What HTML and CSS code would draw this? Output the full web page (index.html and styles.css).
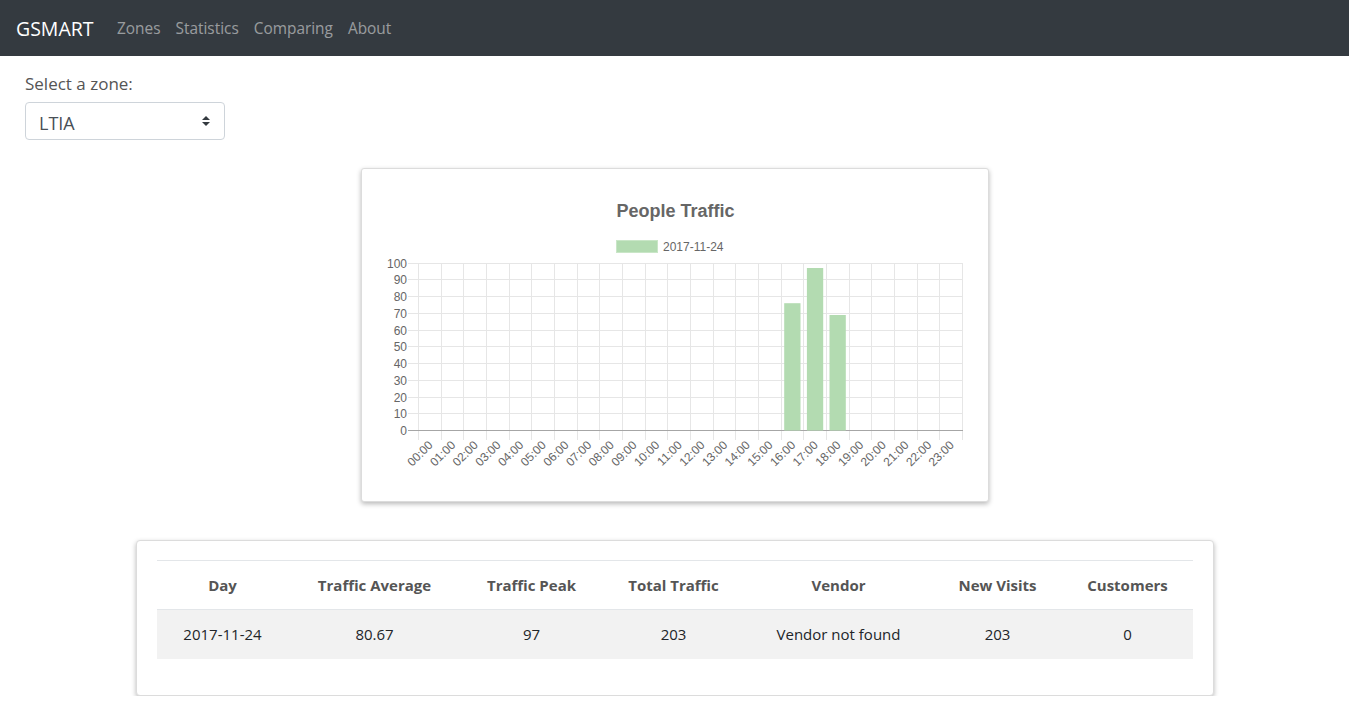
FILE: index.html
```html
<!DOCTYPE html>
<html lang="en">
<head>
<meta charset="utf-8">
<title>GSMART</title>
<link rel="stylesheet" href="styles.css">
</head>
<body>
<nav class="navbar">
  <a class="brand" href="#">GSMART</a>
  <a class="nav-link" href="#">Zones</a>
  <a class="nav-link" href="#">Statistics</a>
  <a class="nav-link" href="#">Comparing</a>
  <a class="nav-link" href="#">About</a>
</nav>
<main class="main">
  <label class="zone-label">Select a zone:</label>
  <div class="zone-select">
    <span class="zone-value">LTIA</span>
    <svg class="select-arrows" width="8" height="10" viewBox="0 0 8 10"><path d="M0 4 L4 0 L8 4 Z M0 6 L4 10 L8 6 Z" fill="#343a40"/></svg>
  </div>

  <section class="chart-card">
    <svg class="chart" width="626" height="332" viewBox="361 169 626 332" font-family="'Liberation Sans', Arial, sans-serif">
      <text x="674.5" y="216.5" text-anchor="middle" font-size="18" font-weight="bold" fill="#666">People Traffic</text>
      <rect x="615.5" y="240.5" width="41" height="12" fill="#b3dbb1" stroke="#c9e6c7" stroke-width="1"/>
      <text x="662" y="250.5" font-size="12" fill="#666">2017-11-24</text>

      <g stroke="#e6e6e6" stroke-width="1">
        <line x1="407" y1="263.5" x2="962" y2="263.5"/>
        <line x1="407" y1="279.5" x2="962" y2="279.5"/>
        <line x1="407" y1="296.5" x2="962" y2="296.5"/>
        <line x1="407" y1="313.5" x2="962" y2="313.5"/>
        <line x1="407" y1="330.5" x2="962" y2="330.5"/>
        <line x1="407" y1="346.5" x2="962" y2="346.5"/>
        <line x1="407" y1="363.5" x2="962" y2="363.5"/>
        <line x1="407" y1="380.5" x2="962" y2="380.5"/>
        <line x1="407" y1="397.5" x2="962" y2="397.5"/>
        <line x1="407" y1="413.5" x2="962" y2="413.5"/>
      </g>
      <g stroke="#e6e6e6" stroke-width="1">
        <line x1="417.5" y1="263" x2="417.5" y2="440"/>
        <line x1="440.5" y1="263" x2="440.5" y2="440"/>
        <line x1="462.5" y1="263" x2="462.5" y2="440"/>
        <line x1="485.5" y1="263" x2="485.5" y2="440"/>
        <line x1="508.5" y1="263" x2="508.5" y2="440"/>
        <line x1="530.5" y1="263" x2="530.5" y2="440"/>
        <line x1="553.5" y1="263" x2="553.5" y2="440"/>
        <line x1="576.5" y1="263" x2="576.5" y2="440"/>
        <line x1="598.5" y1="263" x2="598.5" y2="440"/>
        <line x1="621.5" y1="263" x2="621.5" y2="440"/>
        <line x1="644.5" y1="263" x2="644.5" y2="440"/>
        <line x1="666.5" y1="263" x2="666.5" y2="440"/>
        <line x1="689.5" y1="263" x2="689.5" y2="440"/>
        <line x1="712.5" y1="263" x2="712.5" y2="440"/>
        <line x1="734.5" y1="263" x2="734.5" y2="440"/>
        <line x1="757.5" y1="263" x2="757.5" y2="440"/>
        <line x1="780.5" y1="263" x2="780.5" y2="440"/>
        <line x1="802.5" y1="263" x2="802.5" y2="440"/>
        <line x1="825.5" y1="263" x2="825.5" y2="440"/>
        <line x1="848.5" y1="263" x2="848.5" y2="440"/>
        <line x1="870.5" y1="263" x2="870.5" y2="440"/>
        <line x1="893.5" y1="263" x2="893.5" y2="440"/>
        <line x1="916.5" y1="263" x2="916.5" y2="440"/>
        <line x1="938.5" y1="263" x2="938.5" y2="440"/>
        <line x1="961.5" y1="263" x2="961.5" y2="440"/>
      </g>
      <line x1="407" y1="430.5" x2="962" y2="430.5" stroke="#a6a6a6" stroke-width="1"/>

      <g font-size="12" fill="#666" text-anchor="end">
        <text x="406" y="267.5">100</text>
        <text x="406" y="284">90</text>
        <text x="406" y="301">80</text>
        <text x="406" y="318">70</text>
        <text x="406" y="334.5">60</text>
        <text x="406" y="351">50</text>
        <text x="406" y="368">40</text>
        <text x="406" y="385">30</text>
        <text x="406" y="401.5">20</text>
        <text x="406" y="418">10</text>
        <text x="406" y="435">0</text>
      </g>

      <g fill="#b3dbb1">
        <rect x="783.2" y="303.2" width="16.3" height="127.3"/>
        <rect x="805.9" y="268" width="16.3" height="162.5"/>
        <rect x="828.5" y="315" width="16.3" height="115.5"/>
      </g>

      <g font-size="12" fill="#666" text-anchor="end" dominant-baseline="central">
        <text transform="translate(429.6 443) rotate(-45)">00:00</text>
        <text transform="translate(452.3 443) rotate(-45)">01:00</text>
        <text transform="translate(474.9 443) rotate(-45)">02:00</text>
        <text transform="translate(497.6 443) rotate(-45)">03:00</text>
        <text transform="translate(520.3 443) rotate(-45)">04:00</text>
        <text transform="translate(542.9 443) rotate(-45)">05:00</text>
        <text transform="translate(565.6 443) rotate(-45)">06:00</text>
        <text transform="translate(588.3 443) rotate(-45)">07:00</text>
        <text transform="translate(610.9 443) rotate(-45)">08:00</text>
        <text transform="translate(633.6 443) rotate(-45)">09:00</text>
        <text transform="translate(656.3 443) rotate(-45)">10:00</text>
        <text transform="translate(678.9 443) rotate(-45)">11:00</text>
        <text transform="translate(701.6 443) rotate(-45)">12:00</text>
        <text transform="translate(724.3 443) rotate(-45)">13:00</text>
        <text transform="translate(746.9 443) rotate(-45)">14:00</text>
        <text transform="translate(769.6 443) rotate(-45)">15:00</text>
        <text transform="translate(792.3 443) rotate(-45)">16:00</text>
        <text transform="translate(814.9 443) rotate(-45)">17:00</text>
        <text transform="translate(837.6 443) rotate(-45)">18:00</text>
        <text transform="translate(860.3 443) rotate(-45)">19:00</text>
        <text transform="translate(882.9 443) rotate(-45)">20:00</text>
        <text transform="translate(905.6 443) rotate(-45)">21:00</text>
        <text transform="translate(928.3 443) rotate(-45)">22:00</text>
        <text transform="translate(950.9 443) rotate(-45)">23:00</text>
      </g>
    </svg>
  </section>

  <section class="table-card">
    <table class="stats-table">
      <colgroup>
        <col class="c-day"><col class="c-avg"><col class="c-peak"><col class="c-total"><col class="c-vendor"><col class="c-new"><col class="c-cust">
      </colgroup>
      <thead>
        <tr>
          <th>Day</th><th>Traffic Average</th><th>Traffic Peak</th><th>Total Traffic</th><th>Vendor</th><th>New Visits</th><th>Customers</th>
        </tr>
      </thead>
      <tbody>
        <tr>
          <td>2017-11-24</td><td>80.67</td><td>97</td><td>203</td><td>Vendor not found</td><td>203</td><td>0</td>
        </tr>
      </tbody>
    </table>
  </section>
</main>
</body>
</html>
```

FILE: styles.css
```css
* { box-sizing: border-box; }

body {
  margin: 0;
  font-family: "Open Sans", "Noto Sans", sans-serif;
  color: #212529;
  background: #fff;
}

.navbar {
  height: 56px;
  background: #343a40;
  display: flex;
  align-items: center;
  padding: 2px 16px 0;
}

.brand {
  color: #fff;
  font-size: 19.5px;
  text-decoration: none;
  margin-right: 16px;
  line-height: 30px;
}

.nav-link {
  color: rgba(255, 255, 255, 0.5);
  font-size: 15.4px;
  text-decoration: none;
  padding: 0 7.5px;
  line-height: 24px;
}

.main {
  padding: 15px 25px 0;
}

.zone-label {
  display: block;
  font-size: 17px;
  line-height: 26px;
  color: #555;
  margin-bottom: 5px;
}

.zone-select {
  width: 200px;
  height: 38px;
  border: 1px solid #ced4da;
  border-radius: 4px;
  display: flex;
  align-items: center;
  justify-content: space-between;
  padding: 0 14px 0 13px;
  font-size: 18px;
  color: #495057;
}

.zone-value {
  padding-top: 4px;
}

.select-arrows { display: block; }

.chart-card {
  width: 628px;
  margin: 28px auto 0;
  border: 1px solid #dcdcdc;
  border-radius: 3px;
  box-shadow: 0 2px 5px rgba(0, 0, 0, 0.28);
  background: #fff;
}

.chart { display: block; }

.table-card {
  width: 1078px;
  margin: 38px auto 0;
  border: 1px solid #dcdcdc;
  border-radius: 4px;
  box-shadow: 0 2px 5px rgba(0, 0, 0, 0.28);
  padding: 19px 20px 20px;
  background: #fff;
}

.stats-table {
  width: 100%;
  border-collapse: collapse;
  margin-bottom: 16px;
  table-layout: fixed;
  font-size: 15px;
}

.c-day { width: 132px; }
.c-avg { width: 172px; }
.c-peak { width: 142px; }
.c-total { width: 142px; }
.c-vendor { width: 188px; }
.c-new { width: 130px; }
.c-cust { width: 130px; }

.stats-table th,
.stats-table td {
  text-align: center;
  padding: 12px 0;
  line-height: 24px;
}

.stats-table td {
  color: #212529;
  line-height: 25px;
}

.stats-table th {
  color: #555;
  font-weight: 700;
  border-top: 1px solid #e3e6e9;
  border-bottom: 1px solid #e3e6e9;
}

.stats-table tbody tr {
  background: #f2f2f2;
}
```
